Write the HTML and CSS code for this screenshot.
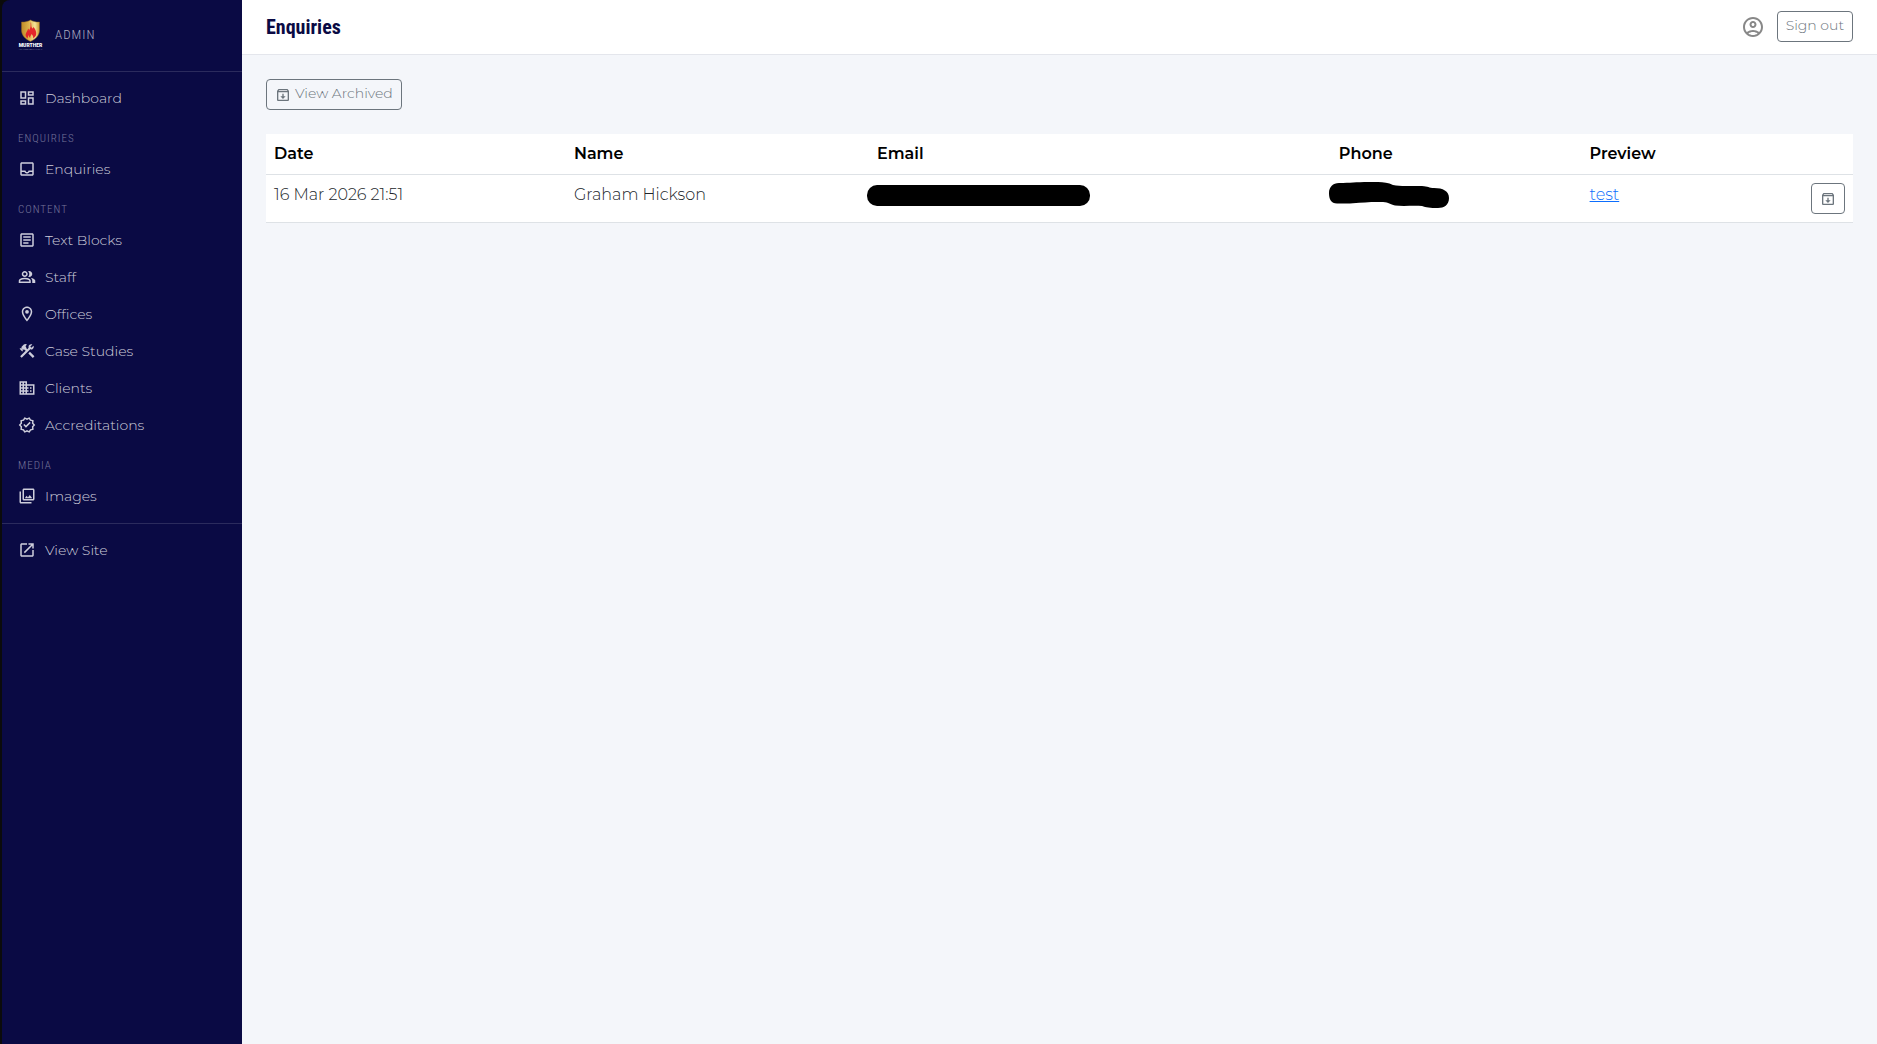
FILE: index.html
```html
<!DOCTYPE html>
<html lang="en">
<head>
    <meta charset="UTF-8">
    <meta name="viewport" content="width=device-width, initial-scale=1.0">
    <title>Enquiries</title>
    <link rel="stylesheet" href="styles.css">
</head>
<body>
    <!-- Icon set -->
    <svg class="icon-defs" aria-hidden="true">
        <symbol id="i-dashboard" viewBox="0 0 24 24"><path d="M19 5v2h-4V5h4M9 5v6H5V5h4m10 8v6h-4v-6h4M9 17v2H5v-2h4M21 3h-8v6h8V3zM11 3H3v10h8V3zm10 8h-8v10h8V11zm-10 4H3v6h8v-6z"/></symbol>
        <symbol id="i-inbox" viewBox="0 0 24 24"><path d="M19 3H5c-1.1 0-2 .9-2 2v14c0 1.1.9 2 2 2h14c1.1 0 2-.9 2-2V5c0-1.1-.9-2-2-2zm0 16H5v-3h3.56c.69 1.19 1.97 2 3.45 2s2.75-.81 3.45-2H19v3zm0-5h-4.99c0 1.1-.9 2-2 2s-2-.9-2-2H5V5h14v9z"/></symbol>
        <symbol id="i-article" viewBox="0 0 24 24"><path d="M19 5v14H5V5h14m0-2H5c-1.1 0-2 .9-2 2v14c0 1.1.9 2 2 2h14c1.1 0 2-.9 2-2V5c0-1.1-.9-2-2-2zM14 17H7v-2h7v2zm3-4H7v-2h10v2zm0-4H7V7h10v2z"/></symbol>
        <symbol id="i-group" viewBox="0 0 24 24"><path d="M1 20v-2.800q0-.850.440-1.560T2.600 14.550q1.550-.780 3.150-1.160T9 13t3.250.390 3.150 1.160q.730.380 1.160 1.090T17 17.200V20H1zm18 0v-3q0-1.100-.610-2.110T16.650 13.150q1.280.150 2.400.510t2.100.890q.900.500 1.370 1.110T23 17v3h-4zM9 12q-1.650 0-2.820-1.180T5 8t1.180-2.820T9 4t2.820 1.180T13 8t-1.180 2.820T9 12zm10-4q0 1.650-1.170 2.820T15 12q-.270 0-.700-.060T13.600 11.800q.680-.800 1.040-1.770T15 8t-.360-2.020T13.600 4.200q.350-.120.700-.160T15 4q1.650 0 2.830 1.180T19 8zM3 18h12v-.800q0-.280-.140-.500t-.360-.350q-1.350-.670-2.720-1.010T9 15t-2.770.340T3.500 16.350q-.220.130-.360.350T3 17.200v.800zm6-8q.830 0 1.410-.590T11 8t-.590-1.410T9 6t-1.410.590T7 8t.590 1.410T9 10z"/></symbol>
        <symbol id="i-place" viewBox="0 0 24 24"><path d="M12 2C8.130 2 5 5.130 5 9c0 5.250 7 13 7 13s7-7.750 7-13c0-3.870-3.130-7-7-7zM7 9c0-2.760 2.240-5 5-5s5 2.240 5 5c0 2.880-2.880 7.190-5 9.880C9.920 16.210 7 11.850 7 9z"/><circle cx="12" cy="9" r="2.500"/></symbol>
        <symbol id="i-build" viewBox="0 0 24 24"><path d="M13.783 15.172l2.121-2.121 5.996 5.996-2.121 2.121zM17.500 10c1.930 0 3.500-1.570 3.500-3.500 0-.580-.160-1.120-.410-1.600l-2.700 2.700-1.490-1.490 2.700-2.700c-.480-.250-1.020-.410-1.600-.410C15.570 3 14 4.570 14 6.500c0 .410.080.800.210 1.160l-1.850 1.850-1.780-1.780.710-.710-1.410-1.410L12 3.490c-1.170-1.170-3.070-1.170-4.240 0L4.220 7.030l1.410 1.410H2.810l-.710.710 3.540 3.540.710-.710V9.150l1.410 1.410.710-.710 1.780 1.780-7.410 7.410 2.120 2.120L16.340 9.790c.360.130.750.210 1.160.210z"/></symbol>
        <symbol id="i-business" viewBox="0 0 24 24"><path d="M12 7V3H2v18h20V7H12zM6 19H4v-2h2v2zm0-4H4v-2h2v2zm0-4H4V9h2v2zm0-4H4V5h2v2zm4 12H8v-2h2v2zm0-4H8v-2h2v2zm0-4H8V9h2v2zm0-4H8V5h2v2zm10 12h-8v-2h2v-2h-2v-2h2v-2h-2V9h8v10zm-2-8h-2v2h2v-2zm0 4h-2v2h2v-2z"/></symbol>
        <symbol id="i-verified" viewBox="0 0 24 24"><path d="M23 12l-2.440-2.780.340-3.680-3.610-.820-1.890-3.180L12 3 8.600 1.540 6.710 4.720l-3.610.810.340 3.680L1 12l2.440 2.780-.340 3.690 3.610.820 1.890 3.180L12 21l3.400 1.460 1.890-3.180 3.610-.820-.340-3.680L23 12zm-4.510 2.110l.260 2.790-2.740.620-1.430 2.410L12 18.820l-2.580 1.110-1.430-2.410-2.740-.620.260-2.800L3.660 12l1.850-2.120-.260-2.780 2.740-.610 1.430-2.410L12 5.180l2.580-1.110 1.430 2.410 2.740.620-.260 2.790L20.340 12l-1.850 2.110z"/><path d="M10.600 15.550L7.050 12l1.400-1.400 2.150 2.100 4.950-4.950 1.400 1.450z"/></symbol>
        <symbol id="i-images" viewBox="0 0 24 24"><path d="M20 4v12H8V4h12m0-2H8c-1.100 0-2 .900-2 2v12c0 1.100.900 2 2 2h12c1.100 0 2-.900 2-2V4c0-1.100-.900-2-2-2zm-8.500 9.670l1.690 2.260 2.480-3.100L19 15H9zM2 6v14c0 1.100.900 2 2 2h14v-2H4V6H2z"/></symbol>
        <symbol id="i-open" viewBox="0 0 24 24"><path d="M19 19H5V5h7V3H5c-1.110 0-2 .900-2 2v14c0 1.100.890 2 2 2h14c1.100 0 2-.900 2-2v-7h-2v7zM14 3v2h3.590l-9.830 9.830 1.410 1.410L19 6.410V10h2V3h-7z"/></symbol>
        <symbol id="i-archive" viewBox="0 0 24 24"><path d="M20.540 5.230l-1.390-1.680C18.880 3.210 18.470 3 18 3H6c-.470 0-.880.210-1.160.550L3.460 5.230C3.170 5.570 3 6.020 3 6.500V19c0 1.100.900 2 2 2h14c1.100 0 2-.900 2-2V6.500c0-.480-.170-.930-.460-1.270zM6.240 5h11.520l.830 1H5.420l.820-1zM5 19V8h14v11H5zm8-9h-2v4H8l4 4 4-4h-3v-4z"/></symbol>
        <symbol id="i-account" viewBox="0 0 24 24"><path d="M12 2C6.480 2 2 6.480 2 12s4.480 10 10 10 10-4.480 10-10S17.520 2 12 2zM7.350 18.500C8.660 17.560 10.260 17 12 17s3.340.560 4.650 1.500C15.340 19.440 13.740 20 12 20s-3.340-.560-4.650-1.500zm10.790-1.380C16.450 15.800 14.320 15 12 15s-4.450.800-6.140 2.120C4.700 15.730 4 13.950 4 12c0-4.420 3.580-8 8-8s8 3.580 8 8c0 1.950-.700 3.730-1.860 5.120z"/><path d="M12 6c-1.930 0-3.500 1.570-3.500 3.500S10.070 13 12 13s3.500-1.570 3.500-3.500S13.930 6 12 6zm0 5c-.830 0-1.500-.670-1.500-1.500S11.170 8 12 8s1.500.670 1.500 1.500S12.830 11 12 11z"/></symbol>
    </svg>

    <aside class="sidebar">
        <div class="brand">
            <svg class="logo" viewBox="0 0 25 32" role="img" aria-label="Murther">
                <defs>
                    <linearGradient id="gold" x1="0" y1="0" x2="1" y2="0">
                        <stop offset="0" stop-color="#c08a28"/>
                        <stop offset=".4" stop-color="#dcb24a"/>
                        <stop offset=".75" stop-color="#f7e39a"/>
                        <stop offset="1" stop-color="#c9982f"/>
                    </linearGradient>
                </defs>
                <path d="M12.500 1C9.500 2.700 6.500 3.200 3.500 3v8c0 5.500 4 9 9 11.500 5-2.500 9-6 9-11.500V3c-3 .2-6-.3-9-2z" fill="url(#gold)" stroke="#8f6420" stroke-width=".5"/>
                <path d="M12.500 3c1.500 2 0 4 1.500 6 .7 1 1.400 0 1.200-1.200 1.800 1.700 3.300 4.700 3 7.200-.2 2-1.400 3.400-3 4.500.3-2-.5-3.200-1.700-4.500-.3 1.500-1.500 2-1.300 4-1.200-.8-1.400-1.800-1.200-3-1 1-1.500 2.200-1.200 3.500C7.500 18 7 16 8.200 13.800c1-2 1.600-2.400 1.800-4.300.8.600 1 1.400.9 2.200C12.800 9 12.800 6 12.500 3z" fill="#e3262b"/>
                <text class="logo-name" x="12.500" y="28" text-anchor="middle">MURTHER</text>
                <text class="logo-tag" x="12.500" y="31" text-anchor="middle">FIREPROOFING SERVICES</text>
            </svg>
            <span class="brand-label">ADMIN</span>
        </div>

        <nav class="menu">
            <a class="menu-item" href="#"><svg class="icon"><use href="#i-dashboard"/></svg>Dashboard</a>

            <div class="menu-title">ENQUIRIES</div>
            <a class="menu-item" href="#"><svg class="icon"><use href="#i-inbox"/></svg>Enquiries</a>

            <div class="menu-title">CONTENT</div>
            <a class="menu-item" href="#"><svg class="icon"><use href="#i-article"/></svg>Text Blocks</a>
            <a class="menu-item" href="#"><svg class="icon"><use href="#i-group"/></svg>Staff</a>
            <a class="menu-item" href="#"><svg class="icon"><use href="#i-place"/></svg>Offices</a>
            <a class="menu-item" href="#"><svg class="icon"><use href="#i-build"/></svg>Case Studies</a>
            <a class="menu-item" href="#"><svg class="icon"><use href="#i-business"/></svg>Clients</a>
            <a class="menu-item" href="#"><svg class="icon"><use href="#i-verified"/></svg>Accreditations</a>

            <div class="menu-title">MEDIA</div>
            <a class="menu-item" href="#"><svg class="icon"><use href="#i-images"/></svg>Images</a>

            <hr class="menu-divider">
            <a class="menu-item" href="#"><svg class="icon"><use href="#i-open"/></svg>View Site</a>
        </nav>
    </aside>

    <div class="page">
        <header class="topbar">
            <h1>Enquiries</h1>
            <div class="topbar-actions">
                <svg class="icon icon-account"><use href="#i-account"/></svg>
                <button class="btn" type="button">Sign out</button>
            </div>
        </header>

        <main>
            <a class="btn" href="#"><svg class="icon icon-small"><use href="#i-archive"/></svg>View Archived</a>

            <table class="enquiries">
                <thead>
                    <tr>
                        <th class="col-date">Date</th>
                        <th class="col-name">Name</th>
                        <th class="col-email">Email</th>
                        <th class="col-phone">Phone</th>
                        <th>Preview</th>
                        <th class="col-action"></th>
                    </tr>
                </thead>
                <tbody>
                    <tr>
                        <td>16 Mar 2026 21:51</td>
                        <td>Graham Hickson</td>
                        <td class="redacted">
                            <svg class="mark mark-email" viewBox="0 0 223 21" role="img" aria-label="Hidden email"><rect width="223" height="21" rx="10"/></svg>
                        </td>
                        <td class="redacted">
                            <svg class="mark mark-phone" viewBox="0 0 120 26" role="img" aria-label="Hidden phone"><path d="M10 1C22 1 26 0 40 0c10 0 17-.5 24 3 9 2 20 .5 29 1 6 .3 7 2 12 2 9 0 15 3 15 10s-5 10-11 10c-8 0-12-.5-16-2-10-.5-20 .5-27-.5-5-1-6-3-12-3.500-12-.3-20 .5-30 1.200-8 .5-11 .3-16 .3C2 21.500 0 17 0 11S4 1 10 1z"/></svg>
                        </td>
                        <td><a href="#">test</a></td>
                        <td class="action">
                            <button class="btn" type="button" aria-label="Archive"><svg class="icon icon-small"><use href="#i-archive"/></svg></button>
                        </td>
                    </tr>
                </tbody>
            </table>
        </main>
    </div>
</body>
</html>
```
FILE: styles.css
```css
* {
    box-sizing: border-box;
}

body {
    display: flex;
    min-height: 100vh;
    margin: 0;
    padding-left: 2px;
    background-color: #0b0b0b;
    color: #212529;
    font-family: Montserrat, Inter, sans-serif;
    font-size: 16px;
    font-weight: 300;
    line-height: 24px;
}

.icon-defs {
    display: none;
}

.icon {
    flex: none;
    width: 18px;
    height: 18px;
    fill: currentColor;
}

.icon-small {
    width: 16px;
    height: 16px;
}

.icon-account {
    width: 24px;
    height: 24px;
    color: #888;
}

/* Sidebar */
.sidebar {
    flex: none;
    width: 240px;
    border-top-left-radius: 8px;
    background-color: #0a0a44;
}

.brand {
    display: flex;
    align-items: center;
    gap: 12px;
    padding: 19px 16px 20px;
    border-bottom: 1px solid #2b2b5d;
}

.logo {
    width: 25px;
    height: 32px;
}

.logo-name {
    fill: #fff;
    font-family: Roboto, sans-serif;
    font-size: 5px;
    font-weight: 900;
}

.logo-tag {
    fill: #c2c2d4;
    font-family: Roboto, sans-serif;
    font-size: 2px;
}

.brand-label,
.menu-title {
    font-family: "Roboto Condensed", "Liberation Sans Narrow", Roboto, sans-serif;
}

.brand-label {
    color: #adadc0;
    font-size: 13px;
    letter-spacing: 1px;
}

.menu {
    padding: 8px 0;
}

.menu-item {
    display: flex;
    align-items: center;
    gap: 9px;
    height: 37px;
    padding: 0 16px 2px;
    color: #cecedb;
    font-size: 14px;
    text-decoration: none;
}

.menu-title {
    padding: 16px 16px 6px;
    color: #75759a;
    font-size: 11px;
    letter-spacing: 1px;
    line-height: 12px;
}

.menu-divider {
    margin: 8px 0;
    border: 0;
    border-top: 1px solid #2b2b5d;
}

/* Page */
.page {
    flex: 1;
    min-width: 0;
    background-color: #f4f6fa;
}

.topbar {
    display: flex;
    align-items: center;
    justify-content: space-between;
    padding: 11px 24px 12px;
    border-bottom: 1px solid #e4e6ec;
    background-color: #fff;
}

h1 {
    margin: 0;
    color: #0a0a44;
    font-family: "Roboto Condensed", "Liberation Sans Narrow", Roboto, sans-serif;
    font-size: 20px;
    font-weight: 700;
}

.topbar-actions {
    display: flex;
    align-items: center;
    gap: 12px;
}

.btn {
    display: inline-flex;
    align-items: flex-start;
    gap: 4px;
    height: 31px;
    padding: 0 8px;
    border: 1px solid #6c757d;
    border-radius: 4px;
    background: transparent;
    color: #6c757d;
    font-family: inherit;
    font-size: 14px;
    font-weight: 300;
    line-height: 27px;
    text-decoration: none;
    vertical-align: top;
}

.btn .icon {
    margin-top: 7px;
}

main {
    padding: 24px;
}

/* Enquiries table */
.enquiries {
    width: 100%;
    margin-top: 24px;
    border-collapse: separate;
    border-spacing: 0;
    table-layout: fixed;
    background-color: #fff;
}

.enquiries th,
.enquiries td {
    padding: 8px;
    border-bottom: 1px solid #dee2e6;
    text-align: left;
    vertical-align: top;
}

.enquiries th {
    color: #000;
    font-weight: 600;
}

.enquiries a {
    color: #0d6efd;
}

.col-date {
    width: 18.9%;
}

.col-name {
    width: 19.1%;
}

.col-email {
    width: 29.1%;
}

.col-phone {
    width: 15.8%;
}

.col-action {
    width: 50px;
}

.enquiries .action {
    text-align: right;
}

.redacted {
    position: relative;
}

.mark {
    position: absolute;
    fill: #000;
}

.mark-email {
    top: 10px;
    left: -2px;
    width: 223px;
    height: 21px;
}

.mark-phone {
    top: 7px;
    left: -2px;
    width: 120px;
    height: 26px;
}
```
